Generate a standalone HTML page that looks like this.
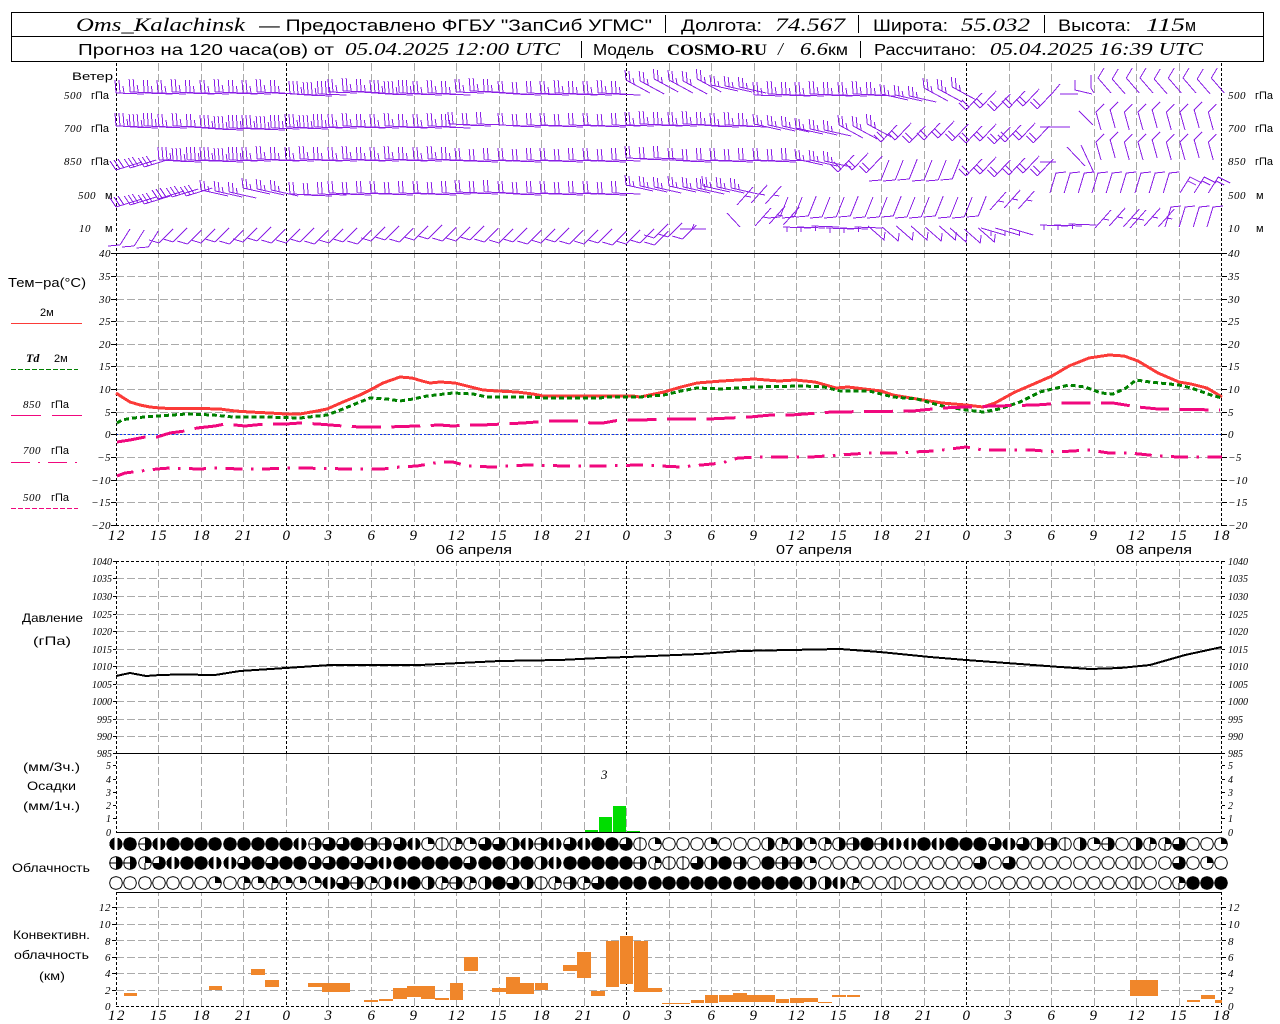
<!DOCTYPE html>
<html><head><meta charset="utf-8"><title>Oms_Kalachinsk</title>
<style>
html,body{margin:0;padding:0;background:#fff}
svg{display:block}
text{font-family:"Liberation Sans",sans-serif;font-size:12px;fill:#000}
.t{font-size:17px}.u{font-size:16px}
.it{font-family:"Liberation Serif",serif;font-style:italic}
.t.it{font-size:18.5px}.u.it{font-size:17.5px}
.sb{font-family:"Liberation Serif",serif;font-weight:bold}
.n{font-family:"Liberation Serif",serif;font-style:italic;font-size:11px;letter-spacing:.5px}
.p{font-family:"Liberation Serif",serif;font-style:italic;font-size:10px}
.e{text-anchor:end}
.x{font-family:"Liberation Serif",serif;font-style:italic;font-size:15px;letter-spacing:1.5px;text-anchor:middle}
.s{font-size:11px}
</style></head><body>
<svg width="1280" height="1024" viewBox="0 0 1280 1024" xmlns="http://www.w3.org/2000/svg">
<defs>
<g id="a" fill="none" stroke="#8a1fe6"><path d="M0 0L28 1M0 0L-1-13M4 0L3-13M8 0L7-13M12 1L11-7"/></g>
<g id="b" fill="none" stroke="#8a1fe6"><path d="M0 0L28 1M0 0L-1-13M4 0L3-13M8 0L7-7"/></g>
<g id="c" fill="none" stroke="#8a1fe6"><path d="M0 0L28 1M0 0L-1-12M4 0L3-12"/></g>
<g id="d" fill="none" stroke="#8a1fe6"><path d="M0 0L24 13M0 0L-1-10M4 2L3-9M8 4L7-2"/></g>
<g id="e0" fill="none" stroke="#8a1fe6"><path d="M0 0L27 6M0 0L-1-10M4 1L3-9M8 2L7-4"/></g>
<g id="f0" fill="none" stroke="#8a1fe6"><path d="M0 0L16-17M0 0L-7-7M3-3L-4-10"/></g>
<g id="g0" fill="none" stroke="#8a1fe6"><path d="M0 0L8-20M0 0L-12 1"/></g>
<g id="h0" fill="none" stroke="#8a1fe6"><path d="M0 0L6-20L16-21"/></g>
<g id="i0" fill="none" stroke="#8a1fe6"><path d="M10-25L4-15L17 0"/></g>
<g id="j0" fill="none" stroke="#8a1fe6"><path d="M5 0L0-18L8-26"/></g>
<g id="k0" fill="none" stroke="#8a1fe6"><path d="M0 0L16 14L17 6"/></g>
<g id="l0" fill="none" stroke="#8a1fe6"><path d="M4 0L14-16M4 0L-8 1"/></g>
<g id="m0" fill="none" stroke="#8a1fe6"><path d="M0 0L14-14M0 0L-10-3"/></g>
<g id="n0" fill="none" stroke="#8a1fe6"><path d="M0 0L28 1M4 0V5"/></g>
<g id="o0" fill="none" stroke="#8a1fe6"><path d="M0 0L24 7M10 3V8"/></g>
<g id="q0" fill="none" stroke="#8a1fe6"><path d="M0 0L16-18M8-9L14-8"/></g>
<g id="r0" fill="none" stroke="#8a1fe6"><path d="M0 0L26-8M0 0L-6-9M4-1L-2-10M8-2L2-11"/></g>
<g id="t0" fill="none" stroke="#8a1fe6"><path d="M0 0L10-16L22-10M8-12L16-8"/></g>
<g id="A"><use href="#a"/><use href="#a" x="14.2" y="1"/><use href="#a" x="28.3"/></g>
<g id="B"><use href="#b"/><use href="#b" x="14.2" y="-1"/><use href="#b" x="28.3"/></g>
<g id="C"><use href="#c"/><use href="#c" x="14.2" y="1"/><use href="#c" x="28.3"/></g>
<g id="D"><use href="#d"/><use href="#d" x="14.2" y="1"/><use href="#d" x="28.3" y="-1"/></g>
<g id="E"><use href="#e0"/><use href="#e0" x="14.2" y="1"/><use href="#e0" x="28.3" y="2"/></g>
<g id="F"><use href="#f0"/><use href="#f0" x="14.2" y="-2"/><use href="#f0" x="28.3" y="1"/></g>
<g id="G"><use href="#g0"/><use href="#g0" x="14.2"/><use href="#g0" x="28.3" y="-1"/></g>
<g id="H"><use href="#h0"/><use href="#h0" x="14.2"/><use href="#h0" x="28.3"/></g>
<g id="I"><use href="#i0"/><use href="#i0" x="14.2" y="1"/><use href="#i0" x="28.3"/></g>
<g id="J"><use href="#j0"/><use href="#j0" x="14.2" y="-2"/><use href="#j0" x="28.3"/></g>
<g id="K"><use href="#k0"/><use href="#k0" x="14.2" y="1"/><use href="#k0" x="28.3"/></g>
<g id="L"><use href="#l0"/><use href="#l0" x="14.2" y="1"/><use href="#l0" x="28.3" y="2"/></g>
<g id="M"><use href="#m0"/><use href="#m0" x="14.2" y="-1"/><use href="#m0" x="28.3" y="1"/></g>
<g id="N"><use href="#n0"/><use href="#n0" x="14.2"/><use href="#n0" x="28.3" y="-1"/></g>
<g id="O"><use href="#o0"/><use href="#o0" x="14.2"/><use href="#o0" x="28.3"/></g>
<g id="Q"><use href="#q0"/><use href="#q0" x="14.2" y="-2"/><use href="#q0" x="28.3" y="-1"/></g>
<g id="R"><use href="#r0"/><use href="#r0" x="14.2" y="-2"/><use href="#r0" x="28.3" y="-3"/></g>
<g id="T"><use href="#t0"/><use href="#t0" x="14.2"/><use href="#t0" x="28.3"/></g>
<g id="z"><circle r="6.3" fill="#fff" stroke="#000"/></g>
<g id="ca"><use href="#z"/></g>
<g id="cb"><use href="#z"/><path d="M0-6V6" stroke="#000"/></g>
<g id="cc"><use href="#z"/><path d="M0 0V-6.3A6.3 6.3 0 0 1 6.3 0Z"/></g>
<g id="cd"><use href="#z"/><path d="M0 0V-6.3A6.3 6.3 0 0 1 6.3 0Z"/><path d="M0 0V6" stroke="#000"/></g>
<g id="ce"><use href="#z"/><path d="M0-6.3A6.3 6.3 0 0 1 0 6.3Z"/></g>
<g id="cf"><use href="#z"/><path d="M0-6.3A6.3 6.3 0 0 1 0 6.3Z"/><path d="M-6 0H0" stroke="#000"/></g>
<g id="cg"><use href="#z"/><path d="M0 0V-6.3A6.3 6.3 0 1 1 -6.3 0Z"/></g>
<g id="ch"><circle r="6.5"/><rect x="-1.5" y="-7" width="3" height="14" fill="#fff"/></g>
<g id="ci"><circle r="6.8"/></g>
</defs>

<g shape-rendering="crispEdges">
<!-- vertical gray grid -->
<path fill="none" stroke="#aaa" stroke-dasharray="8 3" d="M158.5 63V1006M201.5 63V1006M243.5 63V1006M328.5 63V1006M371.5 63V1006M414.5 63V1006M456.5 63V1006M499.5 63V1006M541.5 63V1006M584.5 63V1006M669.5 63V1006M711.5 63V1006M754.5 63V1006M796.5 63V1006M839.5 63V1006M881.5 63V1006M924.5 63V1006M1009.5 63V1006M1051.5 63V1006M1094.5 63V1006M1136.5 63V1006M1179.5 63V1006M286.5 753V832M626.5 753V832M966.5 753V832"/>
<rect x="100" y="526" width="1130" height="35" fill="#fff"/>
<rect x="100" y="833" width="1130" height="59" fill="#fff"/>
<!-- horizontal gray grid -->
<path fill="none" stroke="#aaa" stroke-dasharray="8 3" d="M116 276.5H1222M116 299.5H1222M116 321.5H1222M116 344.5H1222M116 366.5H1222M116 389.5H1222M116 412.5H1222M116 434.5H1222M116 457.5H1222M116 480.5H1222M116 502.5H1222M116 578.5H1222M116 596.5H1222M116 614.5H1222M116 631.5H1222M116 649.5H1222M116 666.5H1222M116 684.5H1222M116 701.5H1222M116 719.5H1222M116 736.5H1222M116 907.5H1222M116 924.5H1222M116 940.5H1222M116 957.5H1222M116 973.5H1222M116 990.5H1222"/>
<path fill="none" stroke="#0a32f0" stroke-dasharray="2 2" d="M116 434.5H1222"/>
<!-- black dashed axes -->
<path fill="none" stroke="#000" stroke-dasharray="3 2" d="M116.5 63V525M1221.5 63V525M116.5 561V832M1221.5 561V832M116.5 892V1006M1221.5 892V1006M286.5 63V525M626.5 63V525M966.5 63V525M286.5 561V753M626.5 561V753M966.5 561V753M286.5 892V1006M626.5 892V1006M966.5 892V1006M116 525.5H1222M116 561.5H1222M116 1006.5H1222"/>
<path fill="none" stroke="#000" d="M116 253.5H1222M116 753.5H1222M116 832.5H1222M116 892.5H1222"/>
<!-- ticks -->
<path fill="none" stroke="#000" d="M111 253.5h5M111 276.5h5M111 299.5h5M111 321.5h5M111 344.5h5M111 366.5h5M111 389.5h5M111 412.5h5M111 434.5h5M111 457.5h5M111 480.5h5M111 502.5h5M111 525.5h5M1222 253.5h5M1222 276.5h5M1222 299.5h5M1222 321.5h5M1222 344.5h5M1222 366.5h5M1222 389.5h5M1222 412.5h5M1222 434.5h5M1222 457.5h5M1222 480.5h5M1222 502.5h5M1222 525.5h5M113 561.5h3M113 578.5h3M113 596.5h3M113 614.5h3M113 631.5h3M113 649.5h3M113 666.5h3M113 684.5h3M113 701.5h3M113 719.5h3M113 736.5h3M113 753.5h3M1222 561.5h3M1222 578.5h3M1222 596.5h3M1222 614.5h3M1222 631.5h3M1222 649.5h3M1222 666.5h3M1222 684.5h3M1222 701.5h3M1222 719.5h3M1222 736.5h3M1222 753.5h3M113 765.5h3M113 779.5h3M113 792.5h3M113 805.5h3M113 818.5h3M1222 765.5h3M1222 779.5h3M1222 792.5h3M1222 805.5h3M1222 818.5h3M112 907.5h4M112 924.5h4M112 940.5h4M112 957.5h4M112 973.5h4M112 990.5h4M1222 907.5h4M1222 924.5h4M1222 940.5h4M1222 957.5h4M1222 973.5h4M1222 990.5h4"/>

<!-- wind row 500 hPa -->
<use href="#B" x="116" y="93"/><use href="#B" x="158" y="93"/><use href="#B" x="201" y="93"/><use href="#B" x="243" y="93"/><use href="#A" x="290" y="94"/><use href="#B" x="329" y="92"/><use href="#A" x="371" y="93"/><use href="#B" x="414" y="94"/><use href="#B" x="456" y="92"/><use href="#C" x="499" y="93"/><use href="#B" x="541" y="94"/><use href="#B" x="584" y="94"/><use href="#D" x="626" y="80"/><use href="#D" x="669" y="80"/><use href="#E" x="711" y="85"/><use href="#B" x="754" y="95"/><use href="#B" x="796" y="95"/><use href="#B" x="839" y="95"/><use href="#E" x="881" y="94"/><use href="#D" x="924" y="88"/><use href="#F" x="966" y="110"/><use href="#F" x="1009" y="108"/>
<path fill="none" stroke="#8a1fe6" shape-rendering="crispEdges" d="M1050 96L1060 84M1060 94H1078M1075 80V90L1092 94M1091 75V88L1094 93"/>
<use href="#I" x="1094" y="93"/><use href="#I" x="1136" y="93"/><use href="#I" x="1179" y="93"/>
<!-- wind row 700 hPa -->
<use href="#A" x="116" y="126"/><use href="#B" x="159" y="127"/><use href="#A" x="201" y="128"/><use href="#A" x="243" y="128"/><use href="#A" x="286" y="127"/><use href="#B" x="329" y="127"/><use href="#B" x="371" y="127"/><use href="#B" x="414" y="127"/><use href="#C" x="449" y="124"/><use href="#C" x="499" y="125"/><use href="#C" x="541" y="125"/><use href="#C" x="584" y="125"/><use href="#B" x="626" y="125"/><use href="#B" x="669" y="125"/><use href="#B" x="711" y="126"/><use href="#E" x="754" y="124"/><use href="#E" x="796" y="128"/><use href="#D" x="839" y="125"/><use href="#F" x="881" y="142"/><use href="#F" x="924" y="140"/><use href="#F" x="966" y="143"/><use href="#F" x="1005" y="142"/>
<path fill="none" stroke="#8a1fe6" d="M1040 127H1070M1079 111L1093 125"/>
<use href="#J" x="1096" y="130"/><use href="#J" x="1138" y="130"/><use href="#J" x="1180" y="130"/>
<!-- wind row 850 hPa -->
<use href="#R" x="116" y="170"/><use href="#A" x="159" y="160"/><use href="#A" x="201" y="160"/><use href="#B" x="243" y="160"/><use href="#B" x="286" y="160"/><use href="#B" x="329" y="160"/><use href="#B" x="371" y="160"/><use href="#B" x="414" y="160"/><use href="#C" x="456" y="160"/><use href="#C" x="499" y="160"/><use href="#C" x="541" y="160"/><use href="#C" x="584" y="160"/><use href="#C" x="626" y="158"/><use href="#C" x="669" y="160"/><use href="#C" x="711" y="160"/><use href="#C" x="754" y="160"/><use href="#E" x="796" y="159"/><use href="#F" x="838" y="172"/><use href="#G" x="881" y="180"/><use href="#G" x="924" y="180"/><use href="#F" x="966" y="176"/><use href="#F" x="1009" y="175"/>
<path fill="none" stroke="#8a1fe6" d="M1040 162H1056M1067 147L1085 166M1081 145L1094 173"/>
<use href="#J" x="1096" y="160"/><use href="#J" x="1138" y="160"/><use href="#J" x="1180" y="160"/>
<!-- wind row 500 m -->
<use href="#R" x="116" y="207"/><use href="#R" x="158" y="199"/><use href="#E" x="201" y="190"/><use href="#E" x="243" y="188"/><use href="#C" x="290" y="194"/><use href="#C" x="329" y="193"/><use href="#C" x="371" y="193"/><use href="#C" x="414" y="193"/><use href="#C" x="456" y="192"/><use href="#C" x="499" y="193"/><use href="#C" x="541" y="193"/><use href="#C" x="584" y="193"/><use href="#E" x="626" y="185"/><use href="#E" x="669" y="186"/><use href="#E" x="703" y="186"/><use href="#Q" x="737" y="205"/><use href="#G" x="780" y="217"/><use href="#G" x="822" y="217"/><use href="#G" x="865" y="217"/><use href="#G" x="907" y="217"/><use href="#G" x="950" y="217"/><use href="#Q" x="990" y="210"/><use href="#H" x="1050" y="193"/><use href="#H" x="1092" y="193"/><use href="#H" x="1135" y="193"/><use href="#T" x="1180" y="193"/>
<!-- wind row 10 m -->
<use href="#L" x="116" y="245"/><use href="#M" x="159" y="243"/><use href="#M" x="201" y="243"/><use href="#M" x="243" y="242"/><use href="#M" x="286" y="243"/><use href="#M" x="329" y="243"/><use href="#M" x="371" y="241"/><use href="#M" x="414" y="240"/><use href="#M" x="456" y="241"/><use href="#M" x="499" y="243"/><use href="#M" x="541" y="243"/><use href="#M" x="584" y="244"/><use href="#M" x="626" y="244"/><use href="#M" x="654" y="238"/>
<path fill="none" stroke="#8a1fe6" d="M680 229H706M692 229L694 224M727 213L740 227"/>
<use href="#Q" x="755" y="226"/><use href="#N" x="783" y="227"/><use href="#N" x="826" y="228"/><use href="#K" x="868" y="226"/><use href="#K" x="911" y="226"/><use href="#K" x="950" y="228"/><use href="#O" x="981" y="228"/><use href="#N" x="1040" y="225"/><use href="#Q" x="1095" y="228"/><use href="#Q" x="1130" y="228"/><use href="#H" x="1165" y="227"/><use href="#h0" x="1207" y="227"/>

<!-- temperature curves -->
<polyline fill="none" stroke="#fb3b38" stroke-width="3" points="116,393 122,397 130,402 140,405 150,407 160,408 170,408.5 200,408.5 220,409 235,411 250,412 270,413 286,414 300,414 317,411 327,409 343,402 360,395 372,389 383,383 400,377 412,378 422,381 430,383 440,382 455,383 467,386 483,390 497,391 517,392 533,394 543,396 567,396 633,396 640,397 664,392 681,387 697,383 722,381 754,379 779,381 795,380 815,382 836,388 848,387 881,391 893,395 917,399 942,403 966,405 983,407 995,403 1015,392 1036,383 1052,376 1069,366 1089,358 1109,355 1124,356 1138,361 1158,373 1179,382 1191,384 1207,388 1222,397"/>
<polyline fill="none" stroke="#008000" stroke-width="3" stroke-dasharray="5 3" points="117,423 122,420 133,418 157,416 187,414 213,415 233,417 267,417 300,418 327,415 343,409 360,402 370,398 387,399 400,401 413,399 427,396 453,393 473,394 487,397 533,397 543,398 600,398 607,397 640,397 664,395 681,391 697,388 722,389 754,387 803,386 824,387 840,391 869,391 893,397 917,399 942,406 966,410 983,412 999,409 1020,402 1040,392 1069,385 1085,387 1101,393 1113,394 1126,388 1136,380 1150,382 1179,385 1191,388 1211,395 1222,398"/>
<polyline fill="none" stroke="#f0087e" stroke-width="3" stroke-dasharray="29 10.5" points="117,442 130,440 145,437 157,437 170,433 185,431 197,428 215,426 225,424 245,426 265,424 286,424 300,423 318,424 343,426 360,427 387,427 417,426 440,425 453,426 467,425 482,425 503,424 523,423 550,421 583,421 590,423 603,423 620,420 640,420 669,419 709,419 750,417 771,415 791,415 832,412 913,411 942,408 966,407 995,406 1036,405 1064,403 1113,403 1138,407 1158,409 1220,410"/>
<polyline fill="none" stroke="#f0087e" stroke-width="3" stroke-dasharray="17 8.5 2.5 8.5" points="117,476 125,473 133,472 157,469 170,468 200,469 215,468 240,469 265,469 286,468 300,468 350,469 383,469 400,467 417,466 440,462 453,462 467,466 493,467 527,465 567,466 600,466 640,465 681,467 722,463 738,458 762,457 811,457 869,453 893,453 934,451 966,447 983,450 1032,450 1056,452 1089,450 1109,453 1130,453 1158,456 1179,457 1222,457"/>
<!-- pressure -->
<polyline fill="none" stroke="#000" stroke-width="2" points="116,676 130,673 146,676 160,675 180,674.5 215,675 240,671 286,668 330,665 420,665 460,663 500,661 560,660 600,658 640,656.5 700,654 740,651 840,649 880,652 930,657 966,660 1020,664 1060,667 1090,669 1120,668 1150,665 1185,655 1222,647"/>
<!-- precip bars -->
<g fill="#00dd00"><rect x="585" y="830" width="13" height="2"/><rect x="599" y="817" width="13" height="15"/><rect x="613" y="806" width="13" height="26"/><rect x="627" y="831" width="13" height="1"/></g>
<!-- convective bars -->
<g fill="#f0862a"><rect x="124" y="993" width="13" height="3"/><rect x="209" y="986" width="13" height="4"/><rect x="251" y="969" width="14" height="6"/><rect x="265" y="980" width="14" height="7"/><rect x="308" y="983" width="14" height="4"/><rect x="322" y="983" width="28" height="9"/><rect x="364" y="1000" width="14" height="2"/><rect x="379" y="999" width="14" height="2"/><rect x="393" y="988" width="14" height="11"/><rect x="407" y="986" width="28" height="11"/><rect x="421" y="986" width="14" height="13"/><rect x="435" y="998" width="14" height="2"/><rect x="450" y="983" width="13" height="17"/><rect x="464" y="957" width="14" height="14"/><rect x="492" y="988" width="14" height="4"/><rect x="506" y="977" width="14" height="17"/><rect x="520" y="983" width="14" height="11"/><rect x="535" y="983" width="13" height="7"/><rect x="563" y="965" width="14" height="6"/><rect x="577" y="952" width="14" height="26"/><rect x="591" y="991" width="14" height="5"/><rect x="606" y="941" width="13" height="46"/><rect x="620" y="936" width="13" height="48"/><rect x="634" y="941" width="14" height="51"/><rect x="648" y="988" width="14" height="4"/><rect x="662" y="1003" width="28" height="1"/><rect x="691" y="1000" width="13" height="3"/><rect x="705" y="995" width="13" height="8"/><rect x="719" y="995" width="14" height="7"/><rect x="733" y="993" width="14" height="9"/><rect x="747" y="995" width="28" height="7"/><rect x="776" y="999" width="13" height="4"/><rect x="790" y="998" width="14" height="5"/><rect x="804" y="998" width="14" height="4"/><rect x="818" y="1002" width="14" height="1"/><rect x="832" y="995" width="14" height="2"/><rect x="847" y="995" width="13" height="2"/><rect x="1130" y="980" width="28" height="16"/><rect x="1187" y="1000" width="13" height="2"/><rect x="1201" y="995" width="14" height="4"/><rect x="1215" y="1000" width="7" height="3"/></g>
<!-- legend lines -->
<path fill="none" stroke="#fb3b38" d="M11 323.5H82"/>
<path fill="none" stroke="#008000" stroke-dasharray="5 2" d="M11 369.5H78"/>
<path fill="none" stroke="#f0087e" d="M11 415.5H41M52 415.5H82M11 462.5H30M38 462.5H40M48 462.5H67M75 462.5H77"/>
<path fill="none" stroke="#f0087e" stroke-dasharray="5 2" d="M11 508.5H78"/>
<!-- header boxes -->
<rect x="11.5" y="12.5" width="1252" height="24" fill="none" stroke="#000"/>
<rect x="11.5" y="36.5" width="1252" height="25" fill="none" stroke="#000"/>
<path fill="none" stroke="#000" d="M665.5 15V33M858.5 15V33M1044.5 15V33M581.5 41V58M860.5 41V58"/>
<!-- clouds row 1 -->
<g transform="translate(0,844)"><use href="#ch" x="116"/><use href="#ci" x="130"/><use href="#cf" x="145"/><use href="#ch" x="159"/><use href="#ci" x="173"/><use href="#ci" x="187"/><use href="#ci" x="201"/><use href="#ci" x="215"/><use href="#ci" x="230"/><use href="#ci" x="244"/><use href="#ci" x="258"/><use href="#ci" x="272"/><use href="#ci" x="286"/><use href="#ch" x="300"/><use href="#cf" x="315"/><use href="#cg" x="329"/><use href="#cg" x="343"/><use href="#ci" x="357"/><use href="#cf" x="371"/><use href="#cf" x="385"/><use href="#cg" x="400"/><use href="#ch" x="414"/><use href="#cc" x="428"/><use href="#cb" x="442"/><use href="#cd" x="456"/><use href="#cc" x="470"/><use href="#cg" x="485"/><use href="#cg" x="499"/><use href="#ce" x="513"/><use href="#ch" x="527"/><use href="#cf" x="541"/><use href="#ch" x="555"/><use href="#cg" x="570"/><use href="#ch" x="584"/><use href="#ci" x="598"/><use href="#ci" x="612"/><use href="#cg" x="626"/><use href="#cb" x="640"/><use href="#cc" x="655"/><use href="#ca" x="669"/><use href="#ca" x="683"/><use href="#ca" x="697"/><use href="#cc" x="711"/><use href="#ca" x="725"/><use href="#ca" x="740"/><use href="#ca" x="754"/><use href="#ce" x="768"/><use href="#cd" x="782"/><use href="#ce" x="796"/><use href="#cc" x="810"/><use href="#cd" x="825"/><use href="#ce" x="839"/><use href="#cf" x="853"/><use href="#ci" x="867"/><use href="#cf" x="881"/><use href="#ch" x="895"/><use href="#ch" x="910"/><use href="#ci" x="924"/><use href="#ch" x="938"/><use href="#ci" x="952"/><use href="#ci" x="966"/><use href="#ci" x="980"/><use href="#cg" x="995"/><use href="#ch" x="1009"/><use href="#cg" x="1023"/><use href="#ce" x="1037"/><use href="#cf" x="1051"/><use href="#cb" x="1065"/><use href="#ce" x="1080"/><use href="#cc" x="1094"/><use href="#cf" x="1108"/><use href="#ca" x="1122"/><use href="#ce" x="1136"/><use href="#cd" x="1150"/><use href="#cd" x="1165"/><use href="#cg" x="1179"/><use href="#ca" x="1193"/><use href="#ca" x="1207"/><use href="#cc" x="1221"/></g>
<!-- clouds row 2 -->
<g transform="translate(0,863)"><use href="#cf" x="116"/><use href="#cf" x="130"/><use href="#cd" x="145"/><use href="#cg" x="159"/><use href="#ch" x="173"/><use href="#ci" x="187"/><use href="#ci" x="201"/><use href="#ch" x="215"/><use href="#ch" x="230"/><use href="#cg" x="244"/><use href="#ci" x="258"/><use href="#cg" x="272"/><use href="#ci" x="286"/><use href="#ci" x="300"/><use href="#cg" x="315"/><use href="#cg" x="329"/><use href="#ci" x="343"/><use href="#cg" x="357"/><use href="#cg" x="371"/><use href="#ch" x="385"/><use href="#ci" x="400"/><use href="#ci" x="414"/><use href="#ci" x="428"/><use href="#ci" x="442"/><use href="#ci" x="456"/><use href="#cg" x="470"/><use href="#ci" x="485"/><use href="#ci" x="499"/><use href="#ce" x="513"/><use href="#ci" x="527"/><use href="#ce" x="541"/><use href="#ch" x="555"/><use href="#ci" x="570"/><use href="#ci" x="584"/><use href="#ci" x="598"/><use href="#ci" x="612"/><use href="#ci" x="626"/><use href="#cf" x="640"/><use href="#cd" x="655"/><use href="#cb" x="669"/><use href="#cb" x="683"/><use href="#cg" x="697"/><use href="#ce" x="711"/><use href="#ci" x="725"/><use href="#cf" x="740"/><use href="#ca" x="754"/><use href="#ci" x="768"/><use href="#cf" x="782"/><use href="#cf" x="796"/><use href="#cc" x="810"/><use href="#ca" x="825"/><use href="#ca" x="839"/><use href="#ca" x="853"/><use href="#ca" x="867"/><use href="#ca" x="881"/><use href="#ca" x="895"/><use href="#ca" x="910"/><use href="#ca" x="924"/><use href="#ca" x="938"/><use href="#ca" x="952"/><use href="#ca" x="966"/><use href="#cg" x="980"/><use href="#ca" x="995"/><use href="#cg" x="1009"/><use href="#ca" x="1023"/><use href="#ca" x="1037"/><use href="#ca" x="1051"/><use href="#ca" x="1065"/><use href="#ca" x="1080"/><use href="#ca" x="1094"/><use href="#ca" x="1108"/><use href="#ca" x="1122"/><use href="#cb" x="1136"/><use href="#ca" x="1150"/><use href="#ca" x="1165"/><use href="#cg" x="1179"/><use href="#ca" x="1193"/><use href="#cc" x="1207"/><use href="#ca" x="1221"/></g>
<!-- clouds row 3 -->
<g transform="translate(0,883)"><use href="#ca" x="116"/><use href="#ca" x="130"/><use href="#ca" x="145"/><use href="#ca" x="159"/><use href="#ca" x="173"/><use href="#ca" x="187"/><use href="#ca" x="201"/><use href="#cc" x="215"/><use href="#ca" x="230"/><use href="#cd" x="244"/><use href="#cc" x="258"/><use href="#cd" x="272"/><use href="#cc" x="286"/><use href="#cc" x="300"/><use href="#cc" x="315"/><use href="#ch" x="329"/><use href="#cg" x="343"/><use href="#cf" x="357"/><use href="#cd" x="371"/><use href="#ce" x="385"/><use href="#ch" x="400"/><use href="#ci" x="414"/><use href="#ce" x="428"/><use href="#cd" x="442"/><use href="#cf" x="456"/><use href="#cd" x="470"/><use href="#ce" x="485"/><use href="#ci" x="499"/><use href="#cg" x="513"/><use href="#ce" x="527"/><use href="#cb" x="541"/><use href="#cd" x="555"/><use href="#cf" x="570"/><use href="#cd" x="584"/><use href="#cg" x="598"/><use href="#ci" x="612"/><use href="#ci" x="626"/><use href="#ci" x="640"/><use href="#ci" x="655"/><use href="#ci" x="669"/><use href="#ci" x="683"/><use href="#ci" x="697"/><use href="#ci" x="711"/><use href="#ci" x="725"/><use href="#ci" x="740"/><use href="#ci" x="754"/><use href="#ci" x="768"/><use href="#ci" x="782"/><use href="#ci" x="796"/><use href="#ce" x="810"/><use href="#ce" x="825"/><use href="#ch" x="839"/><use href="#cd" x="853"/><use href="#ca" x="867"/><use href="#ca" x="881"/><use href="#cb" x="895"/><use href="#ca" x="910"/><use href="#ca" x="924"/><use href="#ca" x="938"/><use href="#ca" x="952"/><use href="#ca" x="966"/><use href="#ca" x="980"/><use href="#ca" x="995"/><use href="#ca" x="1009"/><use href="#ca" x="1023"/><use href="#ca" x="1037"/><use href="#ca" x="1051"/><use href="#ca" x="1065"/><use href="#ca" x="1080"/><use href="#ca" x="1094"/><use href="#ca" x="1108"/><use href="#ca" x="1122"/><use href="#cb" x="1136"/><use href="#ca" x="1150"/><use href="#ca" x="1165"/><use href="#cd" x="1179"/><use href="#ci" x="1193"/><use href="#ci" x="1207"/><use href="#ci" x="1221"/></g>
</g>

<!-- header text -->
<text class="t it" x="76" y="31" textLength="169" lengthAdjust="spacingAndGlyphs">Oms_Kalachinsk</text>
<text class="t" x="259" y="31" textLength="393" lengthAdjust="spacingAndGlyphs">— Предоставлено ФГБУ "ЗапСиб УГМС"</text>
<text class="t" x="681" y="31" textLength="81" lengthAdjust="spacingAndGlyphs">Долгота:</text>
<text class="t it" x="775" y="31" textLength="70" lengthAdjust="spacingAndGlyphs">74.567</text>
<text class="t" x="873" y="31" textLength="75" lengthAdjust="spacingAndGlyphs">Широта:</text>
<text class="t it" x="961" y="31" textLength="69" lengthAdjust="spacingAndGlyphs">55.032</text>
<text class="t" x="1058" y="31" textLength="73" lengthAdjust="spacingAndGlyphs">Высота:</text>
<text class="t it" x="1146" y="31" textLength="39" lengthAdjust="spacingAndGlyphs">115</text>
<text class="t" x="1185" y="31" textLength="11" lengthAdjust="spacingAndGlyphs">м</text>
<text class="u" x="78" y="55" textLength="256" lengthAdjust="spacingAndGlyphs">Прогноз на 120 часа(ов) от</text>
<text class="u it" x="345" y="55" textLength="215" lengthAdjust="spacingAndGlyphs">05.04.2025 12:00 UTC</text>
<text class="u" x="593" y="55" textLength="61" lengthAdjust="spacingAndGlyphs">Модель</text>
<text class="u sb" x="667" y="55" textLength="100" lengthAdjust="spacingAndGlyphs">COSMO-RU</text>
<text class="u it" x="778" y="55">/</text>
<text class="u it" x="800" y="55" textLength="28" lengthAdjust="spacingAndGlyphs">6.6</text>
<text class="u" x="828" y="55" textLength="20" lengthAdjust="spacingAndGlyphs">км</text>
<text class="u" x="874" y="55" textLength="102" lengthAdjust="spacingAndGlyphs">Рассчитано:</text>
<text class="u it" x="990" y="55" textLength="213" lengthAdjust="spacingAndGlyphs">05.04.2025 16:39 UTC</text>

<!-- wind labels -->
<text class="s" x="72" y="80" textLength="41" lengthAdjust="spacingAndGlyphs">Ветер</text>
<text class="n" x="64" y="99">500</text><text class="s" x="91" y="99">гПа</text>
<text class="n" x="64" y="132">700</text><text class="s" x="91" y="132">гПа</text>
<text class="n" x="64" y="165">850</text><text class="s" x="91" y="165">гПа</text>
<text class="n" x="78" y="199">500</text><text class="s" x="105" y="199">м</text>
<text class="n" x="79" y="232">10</text><text class="s" x="105" y="232">м</text>
<text class="n" x="1228" y="99">500</text><text class="s" x="1255" y="99">гПа</text>
<text class="n" x="1228" y="132">700</text><text class="s" x="1255" y="132">гПа</text>
<text class="n" x="1228" y="165">850</text><text class="s" x="1255" y="165">гПа</text>
<text class="n" x="1228" y="199">500</text><text class="s" x="1256" y="199">м</text>
<text class="n" x="1228" y="232">10</text><text class="s" x="1256" y="232">м</text>

<!-- temp legend -->
<text x="8" y="287" textLength="78" lengthAdjust="spacingAndGlyphs" style="font-size:13px">Тем−ра(°С)</text>
<text class="s" x="40" y="316">2м</text>
<text class="it" x="26" y="362" style="font-size:12px;font-weight:bold">Td</text><text class="s" x="54" y="362">2м</text>
<text class="n" x="23" y="408">850</text><text class="s" x="51" y="408">гПа</text>
<text class="n" x="23" y="454">700</text><text class="s" x="51" y="454">гПа</text>
<text class="n" x="23" y="501">500</text><text class="s" x="51" y="501">гПа</text>

<!-- temp axis -->
<text class="n e" x="111" y="257">40</text><text class="n e" x="111" y="280">35</text><text class="n e" x="111" y="303">30</text><text class="n e" x="111" y="325">25</text><text class="n e" x="111" y="348">20</text><text class="n e" x="111" y="370">15</text><text class="n e" x="111" y="393">10</text><text class="n e" x="111" y="416">5</text><text class="n e" x="111" y="438">0</text><text class="n e" x="111" y="461">−5</text><text class="n e" x="111" y="484">−10</text><text class="n e" x="111" y="506">−15</text><text class="n e" x="111" y="529">−20</text>
<text class="n" x="1228" y="257">40</text><text class="n" x="1228" y="280">35</text><text class="n" x="1228" y="303">30</text><text class="n" x="1228" y="325">25</text><text class="n" x="1228" y="348">20</text><text class="n" x="1228" y="370">15</text><text class="n" x="1228" y="393">10</text><text class="n" x="1228" y="416">5</text><text class="n" x="1228" y="438">0</text><text class="n" x="1228" y="461">−5</text><text class="n" x="1228" y="484">−10</text><text class="n" x="1228" y="506">−15</text><text class="n" x="1228" y="529">−20</text>

<!-- x labels top -->
<text class="x" x="117" y="540">12</text><text class="x" x="159" y="540">15</text><text class="x" x="202" y="540">18</text><text class="x" x="244" y="540">21</text><text class="x" x="287" y="540">0</text><text class="x" x="329" y="540">3</text><text class="x" x="372" y="540">6</text><text class="x" x="414" y="540">9</text><text class="x" x="457" y="540">12</text><text class="x" x="499" y="540">15</text><text class="x" x="542" y="540">18</text><text class="x" x="584" y="540">21</text><text class="x" x="627" y="540">0</text><text class="x" x="669" y="540">3</text><text class="x" x="712" y="540">6</text><text class="x" x="754" y="540">9</text><text class="x" x="797" y="540">12</text><text class="x" x="839" y="540">15</text><text class="x" x="882" y="540">18</text><text class="x" x="924" y="540">21</text><text class="x" x="967" y="540">0</text><text class="x" x="1009" y="540">3</text><text class="x" x="1052" y="540">6</text><text class="x" x="1094" y="540">9</text><text class="x" x="1137" y="540">12</text><text class="x" x="1179" y="540">15</text><text class="x" x="1222" y="540">18</text>
<text x="436" y="554" textLength="76" lengthAdjust="spacingAndGlyphs" style="font-size:13px">06 апреля</text>
<text x="776" y="554" textLength="76" lengthAdjust="spacingAndGlyphs" style="font-size:13px">07 апреля</text>
<text x="1116" y="554" textLength="76" lengthAdjust="spacingAndGlyphs" style="font-size:13px">08 апреля</text>

<!-- pressure axis -->
<text x="22" y="622" textLength="61" lengthAdjust="spacingAndGlyphs">Давление</text><text x="33" y="645" textLength="38" lengthAdjust="spacingAndGlyphs">(гПа)</text>
<text class="p e" x="112" y="565">1040</text><text class="p e" x="112" y="582">1035</text><text class="p e" x="112" y="600">1030</text><text class="p e" x="112" y="618">1025</text><text class="p e" x="112" y="635">1020</text><text class="p e" x="112" y="653">1015</text><text class="p e" x="112" y="670">1010</text><text class="p e" x="112" y="688">1005</text><text class="p e" x="112" y="705">1000</text><text class="p e" x="112" y="723">995</text><text class="p e" x="112" y="740">990</text><text class="p e" x="112" y="757">985</text>
<text class="p" x="1228" y="565">1040</text><text class="p" x="1228" y="582">1035</text><text class="p" x="1228" y="600">1030</text><text class="p" x="1228" y="618">1025</text><text class="p" x="1228" y="635">1020</text><text class="p" x="1228" y="653">1015</text><text class="p" x="1228" y="670">1010</text><text class="p" x="1228" y="688">1005</text><text class="p" x="1228" y="705">1000</text><text class="p" x="1228" y="723">995</text><text class="p" x="1228" y="740">990</text><text class="p" x="1228" y="757">985</text>

<!-- precip -->
<text x="23" y="771" textLength="57" lengthAdjust="spacingAndGlyphs">(мм/3ч.)</text><text x="27" y="790" textLength="49" lengthAdjust="spacingAndGlyphs">Осадки</text><text x="23" y="810" textLength="57" lengthAdjust="spacingAndGlyphs">(мм/1ч.)</text>
<text class="p e" x="111" y="769">5</text><text class="p e" x="111" y="783">4</text><text class="p e" x="111" y="796">3</text><text class="p e" x="111" y="809">2</text><text class="p e" x="111" y="822">1</text><text class="p e" x="111" y="836">0</text>
<text class="p" x="1228" y="769">5</text><text class="p" x="1228" y="783">4</text><text class="p" x="1228" y="796">3</text><text class="p" x="1228" y="809">2</text><text class="p" x="1228" y="822">1</text><text class="p" x="1228" y="836">0</text>
<text class="n" x="601" y="779" style="font-size:13px">3</text>
<text x="12" y="872" textLength="78" lengthAdjust="spacingAndGlyphs">Облачность</text>

<!-- conv -->
<text x="13" y="939" textLength="77" lengthAdjust="spacingAndGlyphs">Конвективн.</text><text x="14" y="959" textLength="75" lengthAdjust="spacingAndGlyphs">облачность</text><text x="39" y="980" textLength="26" lengthAdjust="spacingAndGlyphs">(км)</text>
<text class="n e" x="111" y="911">12</text><text class="n e" x="111" y="928">10</text><text class="n e" x="111" y="945">8</text><text class="n e" x="111" y="961">6</text><text class="n e" x="111" y="977">4</text><text class="n e" x="111" y="994">2</text><text class="n e" x="111" y="1010">0</text>
<text class="n" x="1228" y="911">12</text><text class="n" x="1228" y="928">10</text><text class="n" x="1228" y="945">8</text><text class="n" x="1228" y="961">6</text><text class="n" x="1228" y="977">4</text><text class="n" x="1228" y="994">2</text><text class="n" x="1228" y="1010">0</text>
<text class="x" x="117" y="1020">12</text><text class="x" x="159" y="1020">15</text><text class="x" x="202" y="1020">18</text><text class="x" x="244" y="1020">21</text><text class="x" x="287" y="1020">0</text><text class="x" x="329" y="1020">3</text><text class="x" x="372" y="1020">6</text><text class="x" x="414" y="1020">9</text><text class="x" x="457" y="1020">12</text><text class="x" x="499" y="1020">15</text><text class="x" x="542" y="1020">18</text><text class="x" x="584" y="1020">21</text><text class="x" x="627" y="1020">0</text><text class="x" x="669" y="1020">3</text><text class="x" x="712" y="1020">6</text><text class="x" x="754" y="1020">9</text><text class="x" x="797" y="1020">12</text><text class="x" x="839" y="1020">15</text><text class="x" x="882" y="1020">18</text><text class="x" x="924" y="1020">21</text><text class="x" x="967" y="1020">0</text><text class="x" x="1009" y="1020">3</text><text class="x" x="1052" y="1020">6</text><text class="x" x="1094" y="1020">9</text><text class="x" x="1137" y="1020">12</text><text class="x" x="1179" y="1020">15</text><text class="x" x="1222" y="1020">18</text>
</svg>
</body></html>
